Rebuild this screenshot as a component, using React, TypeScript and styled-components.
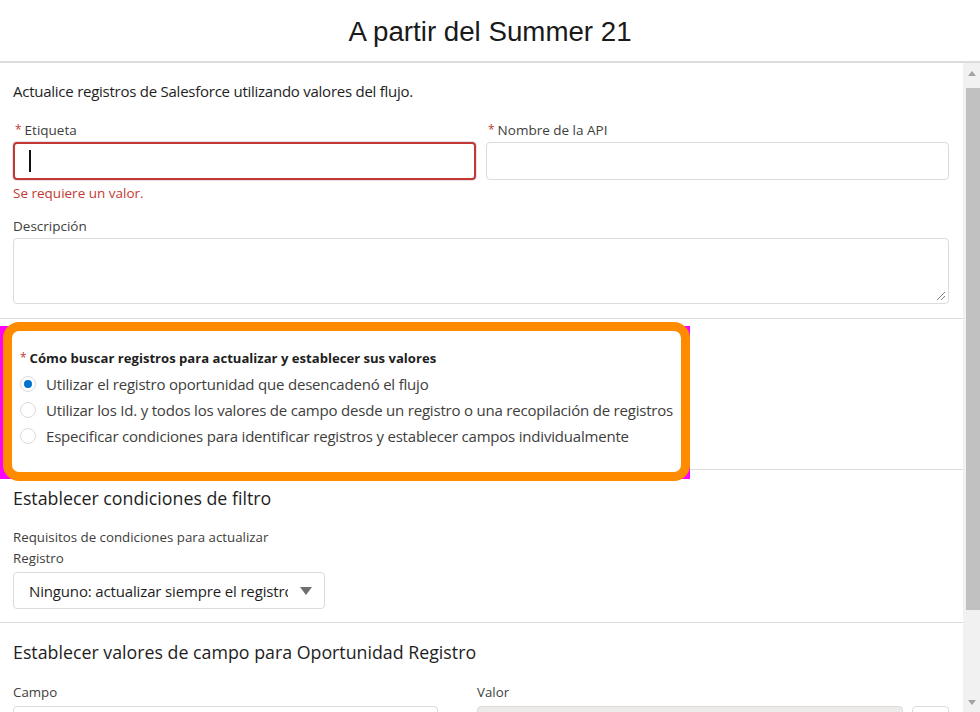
import React from "react";
import styled, { createGlobalStyle } from "styled-components";

const Global = createGlobalStyle`
  html, body { margin: 0; padding: 0; background: #fff; }
  body { font-family: "Open Sans", "Noto Sans", sans-serif; color: #3e3e3c; }
  * { box-sizing: border-box; }
`;

const Page = styled.div`
  width: 980px;
  height: 712px;
  display: flex;
  flex-direction: column;
  overflow: hidden;
`;

const Header = styled.header`
  height: 63px;
  flex: none;
  border-bottom: 2px solid #dcdcdc;
  display: flex;
  align-items: center;
  justify-content: center;
  padding-top: 3px;
`;

const Title = styled.h1`
  margin: 0;
  font-family: "Liberation Sans", Arial, sans-serif;
  font-weight: 400;
  font-size: 27.7px;
  color: #1a1a1a;
`;

const Body = styled.div`
  flex: 1;
  display: flex;
  min-height: 0;
`;

const Content = styled.main`
  flex: 1;
  min-width: 0;
  display: flex;
  flex-direction: column;
`;

const Scrollbar = styled.div`
  width: 17px;
  flex: none;
  background: #f1f1f1;
  display: flex;
  flex-direction: column;
  align-items: center;
  padding: 8px 0 7px;
`;

const Arrow = styled.div<{ $down?: boolean }>`
  width: 0;
  height: 0;
  border-left: 4px solid transparent;
  border-right: 4px solid transparent;
  ${(p) => (p.$down ? "border-top: 5px solid #a3a3a3;" : "border-bottom: 5px solid #a3a3a3;")}
`;

const Thumb = styled.div`
  width: 14px;
  margin-left: 3px;
  height: 522px;
  background: #c1c1c1;
  margin-top: 12px;
`;

const Spacer = styled.div`
  flex: 1;
`;

const Section = styled.section<{ $pt: number; $h: number; $last?: boolean }>`
  position: relative;
  flex: none;
  height: ${(p) => p.$h}px;
  padding: ${(p) => p.$pt}px 14px 0 13px;
  border-bottom: ${(p) => (p.$last ? "0" : "1px solid #dddbda")};
`;

const Intro = styled.p`
  margin: 0;
  font-size: 15px;
  letter-spacing: -0.25px;
  line-height: 20px;
  color: #1e1e1e;
`;

const Row = styled.div`
  display: flex;
  gap: 10px;
  margin-top: 20px;
`;

const Field = styled.div`
  flex: 1;
  display: flex;
  flex-direction: column;
`;

const Label = styled.label`
  font-size: 13.5px;
  line-height: 18px;
  color: #3e3e3c;
  margin-bottom: 3px;
  display: flex;
  align-items: center;
`;

const Req = styled.abbr`
  color: #c23934;
  text-decoration: none;
  font-size: 12px;
  margin: 0 3px 0 2px;
`;

const Input = styled.div<{ $error?: boolean; $grey?: boolean }>`
  height: 38px;
  border-radius: 4px;
  border: ${(p) => (p.$error ? "2px solid #c23934" : "1px solid #dddbda")};
  background: ${(p) => (p.$grey ? "#ecebea" : "#fff")};
  display: flex;
  align-items: center;
  padding-left: 14px;
  box-shadow: ${(p) => (p.$error ? "0 0 0 1px #e6e0f0" : "none")};
`;

const Caret = styled.span`
  width: 1.5px;
  height: 22px;
  background: #111;
`;

const ErrorText = styled.div`
  font-size: 13.5px;
  line-height: 18px;
  color: #c23934;
  margin-top: 4px;
`;

const DescLabel = styled(Label)`
  margin-top: 15px;
`;

const TextArea = styled.div`
  height: 66px;
  border: 1px solid #dddbda;
  border-radius: 4px;
  position: relative;
`;

const Grip = styled.svg`
  position: absolute;
  right: 2px;
  bottom: 2px;
`;

const Highlight = styled.div`
  position: absolute;
  left: 0;
  top: 7px;
  width: 690px;
  height: 153px;
  background: #ff00ff;
  z-index: 1;
`;

const Orange = styled.div`
  position: absolute;
  left: 3px;
  top: -4px;
  right: 0;
  bottom: -2px;
  border: 9px solid #ff8c00;
  border-radius: 16px;
  background: #fff;
`;

const Group = styled.fieldset`
  position: relative;
  z-index: 2;
  border: 0;
  margin: 0;
  padding: 0 0 0 7px;
`;

const Legend = styled.legend`
  padding: 0;
  font-size: 13.1px;
  font-weight: 700;
  line-height: 18px;
  color: #1e1e1e;
  display: flex;
  align-items: center;
  margin-bottom: 4px;
`;

const LegendReq = styled(Req)`
  margin: 0 3px 0 0;
  font-weight: 400;
`;

const Option = styled.label`
  display: flex;
  align-items: center;
  height: 26px;
  font-size: 15px;
  letter-spacing: -0.2px;
  color: #3e3e3c;
`;

const Radio = styled.span<{ $on?: boolean }>`
  width: 16px;
  height: 16px;
  border-radius: 50%;
  border: 1px solid #dddbda;
  background: #fff;
  margin-right: 10px;
  flex: none;
  display: flex;
  align-items: center;
  justify-content: center;
  &::after {
    content: "";
    display: ${(p) => (p.$on ? "block" : "none")};
    width: 8px;
    height: 8px;
    border-radius: 50%;
    background: #0070d2;
  }
`;

const H2 = styled.h2`
  margin: 0;
  font-size: 17.8px;
  font-weight: 400;
  line-height: 24px;
  color: #1e1e1e;
`;

const SubText = styled.div<{ $mt?: number }>`
  font-size: 13.3px;
  line-height: 21px;
  color: #3e3e3c;
  margin-top: ${(p) => p.$mt ?? 0}px;
`;

const Select = styled.div`
  width: 312px;
  height: 37px;
  margin-top: 3px;
  border: 1px solid #dddbda;
  border-radius: 4px;
  display: flex;
  align-items: center;
  padding: 0 12px 0 15px;
  gap: 12px;
`;

const SelectText = styled.span`
  flex: 1;
  overflow: hidden;
  white-space: nowrap;
  font-size: 15px;
  letter-spacing: -0.15px;
  color: #1e1e1e;
`;

const Tri = styled.span`
  width: 0;
  height: 0;
  border-left: 6px solid transparent;
  border-right: 6px solid transparent;
  border-top: 8px solid #706e6b;
`;

const FieldRow = styled.div`
  display: flex;
  margin-top: 18px;
  align-items: flex-start;
`;

const Col = styled.div<{ $w: number; $ml?: number }>`
  width: ${(p) => p.$w}px;
  margin-left: ${(p) => p.$ml ?? 0}px;
  display: flex;
  flex-direction: column;
  gap: 3px;
`;

const SmallBox = styled.div`
  width: 37px;
  height: 38px;
  margin-left: 9px;
  margin-top: 24px;
  border: 1px solid #dddbda;
  border-radius: 4px;
`;

export default function App() {
  return (
    <Page>
      <Global />
      <Header>
        <Title>A partir del Summer 21</Title>
      </Header>
      <Body>
        <Content>
          <Section $pt={18} $h={256}>
            <Intro>Actualice registros de Salesforce utilizando valores del flujo.</Intro>
            <Row>
              <Field>
                <Label>
                  <Req>*</Req>Etiqueta
                </Label>
                <Input $error>
                  <Caret />
                </Input>
                <ErrorText>Se requiere un valor.</ErrorText>
              </Field>
              <Field>
                <Label>
                  <Req>*</Req>Nombre de la API
                </Label>
                <Input />
              </Field>
            </Row>
            <DescLabel>Descripción</DescLabel>
            <TextArea>
              <Grip width="12" height="12" viewBox="0 0 12 12">
                <path d="M11 3 L3 11 M11 7 L7 11" stroke="#808080" strokeWidth="1" fill="none" />
              </Grip>
            </TextArea>
          </Section>
          <Section $pt={30} $h={151}>
            <Highlight>
              <Orange />
            </Highlight>
            <Group>
              <Legend>
                <LegendReq>*</LegendReq>Cómo buscar registros para actualizar y establecer sus valores
              </Legend>
              <Option>
                <Radio $on />
                Utilizar el registro oportunidad que desencadenó el flujo
              </Option>
              <Option>
                <Radio />
                Utilizar los Id. y todos los valores de campo desde un registro o una recopilación de registros
              </Option>
              <Option>
                <Radio />
                Especificar condiciones para identificar registros y establecer campos individualmente
              </Option>
            </Group>
          </Section>
          <Section $pt={16} $h={153}>
            <H2>Establecer condiciones de filtro</H2>
            <SubText $mt={17}>Requisitos de condiciones para actualizar</SubText>
            <SubText>Registro</SubText>
            <Select>
              <SelectText>Ninguno: actualizar siempre el registro</SelectText>
              <Tri />
            </Select>
          </Section>
          <Section $pt={17} $h={120} $last>
            <H2>Establecer valores de campo para Oportunidad Registro</H2>
            <FieldRow>
              <Col $w={425}>
                <SubText>Campo</SubText>
                <Input />
              </Col>
              <Col $w={426} $ml={39}>
                <SubText>Valor</SubText>
                <Input $grey />
              </Col>
              <SmallBox />
            </FieldRow>
          </Section>
        </Content>
        <Scrollbar>
          <Arrow />
          <Thumb />
          <Spacer />
          <Arrow $down />
        </Scrollbar>
      </Body>
    </Page>
  );
}
